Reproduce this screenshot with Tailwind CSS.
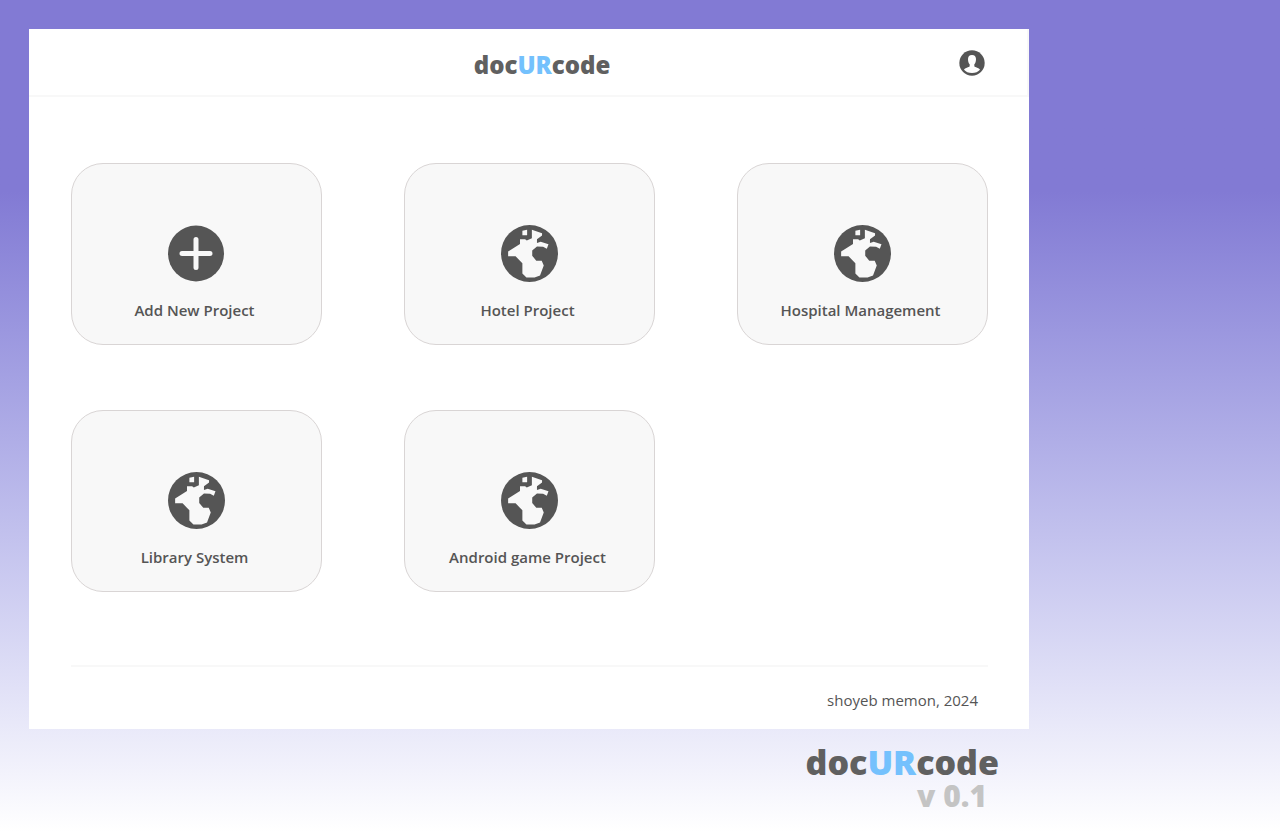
<!DOCTYPE html>
<html lang="en">
<head>
  <meta charset="UTF-8" />
  <meta name="viewport" content="width=device-width, initial-scale=1.0"/>
  <title>docURcode</title>
  <!-- Tailwind via CDN -->
  <script src="https://cdn.jsdelivr.net/npm/@tailwindcss/browser@4"></script>
</head>
<body class="min-h-screen bg-linear-to-b from-[#827ad4] from-23% to-white font-['Open_Sans',sans-serif] text-[#555555]">

  <!-- Globe icon, shared by the project cards -->
  <svg class="hidden">
    <symbol id="globe" viewBox="0 0 168 168">
      <circle cx="84" cy="84" r="84" fill="#555555"/>
      <path fill="#f8f8f8" d="M63 17l14-3v16H63zM21 78l35-22V42h15l5 4 15-7V14l30 10v7l-15 11v11l11-4 23 8-5 13-11-6-18-1-14 12v16l12 14h16l6 14-11 30-16 6H75l-12-12v-30L43 92H21z"/>
    </symbol>
  </svg>

  <div class="max-w-[1029px] pt-[29px] pl-[29px]">
    <div class="bg-white">

      <!-- Header -->
      <header class="grid grid-cols-[1fr_auto_1fr] items-center border-r-2 border-b-2 border-[#f8f8f8] pt-1.5 pr-[42px] pl-[70px] h-[68px]">
        <h1 class="col-start-2 text-2xl font-extrabold text-[#606060]">doc<span class="text-[#74c1fd]">UR</span>code</h1>
        <button type="button" aria-label="Account" class="justify-self-end mb-1 cursor-pointer">
          <svg class="size-[26px]" viewBox="0 0 78 78">
            <circle cx="39" cy="39" r="38" fill="#555555"/>
            <path fill="#fff" d="M39 15c8 0 12 5 12 12 0 7-2 13-5 16v6c2 4 14 4 17 10-5 6-14 10-24 10s-19-4-24-10c3-6 15-6 17-10v-6c-3-3-5-9-5-16 0-7 4-12 12-12z"/>
          </svg>
        </button>
      </header>

      <!-- Projects -->
      <main class="grid grid-cols-3 gap-x-[82px] gap-y-[65px] pr-[41px] pl-[42px] pt-[66px] pb-[73px]">
        <a href="#new" class="flex flex-col items-center rounded-[32px] border border-[#d9d5d5] bg-[#f8f8f8] pt-[61px] pb-[22px]">
          <svg class="size-[57px]" viewBox="0 0 57 57">
            <circle cx="28" cy="28.5" r="28" fill="#555555"/>
            <path d="M28 14.5v28M14 28.5h28" stroke="#f8f8f8" stroke-width="5" stroke-linecap="round"/>
          </svg>
          <span class="mt-4 pr-1 text-[15px] leading-6 font-semibold">Add New Project</span>
        </a>
        <a href="#hotel" class="flex flex-col items-center rounded-[32px] border border-[#d9d5d5] bg-[#f8f8f8] pt-[61px] pb-[22px]">
          <svg class="size-[57px]"><use href="#globe"/></svg>
          <span class="mt-4 pr-1 text-[15px] leading-6 font-semibold">Hotel Project</span>
        </a>
        <a href="#hospital" class="flex flex-col items-center rounded-[32px] border border-[#d9d5d5] bg-[#f8f8f8] pt-[61px] pb-[22px]">
          <svg class="size-[57px]"><use href="#globe"/></svg>
          <span class="mt-4 pr-1 text-[15px] leading-6 font-semibold">Hospital Management</span>
        </a>
        <a href="#library" class="flex flex-col items-center rounded-[32px] border border-[#d9d5d5] bg-[#f8f8f8] pt-[61px] pb-[22px]">
          <svg class="size-[57px]"><use href="#globe"/></svg>
          <span class="mt-4 pr-1 text-[15px] leading-6 font-semibold">Library System</span>
        </a>
        <a href="#android" class="flex flex-col items-center rounded-[32px] border border-[#d9d5d5] bg-[#f8f8f8] pt-[61px] pb-[22px]">
          <svg class="size-[57px]"><use href="#globe"/></svg>
          <span class="mt-4 pr-1 text-[15px] leading-6 font-semibold">Android game Project</span>
        </a>
      </main>

      <!-- Footer -->
      <footer class="mr-[41px] ml-[42px] border-t-2 border-[#f8f8f8] pt-[21px] pr-2.5 pb-[17px] text-right text-[15px] leading-6">
        shoyeb memon, 2024
      </footer>
    </div>

    <!-- Version -->
    <div class="pt-[13px] pr-[30px] text-right font-extrabold">
      <p class="text-[34px] leading-10 text-[#606060]">doc<span class="text-[#74c1fd]">UR</span>code</p>
      <p class="pr-3 text-3xl leading-7 text-[#c4c4c4]">v 0.1</p>
    </div>
  </div>

</body>
</html>
